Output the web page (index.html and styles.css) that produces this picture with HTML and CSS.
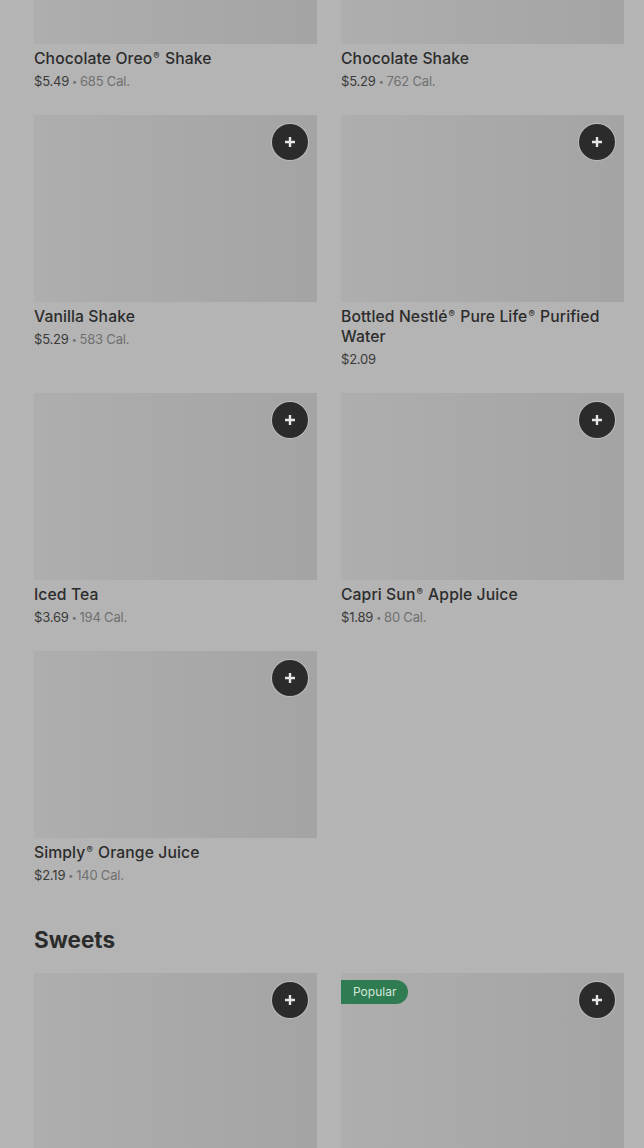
FILE: index.html
```html
<!doctype html>
<html>
<head>
    <title>Menu</title>
    <meta http-equiv="Content-Type" content="text/html; charset=utf-8" />
    <link rel="stylesheet" href="styles.css">
</head>
<body>
<div class="menu">
    <div class="grid">
        <div class="item">
            <div class="pic"></div>
            <div class="name">Chocolate Oreo<sup>®</sup> Shake</div>
            <div class="price">$5.49<span class="dot">•</span><span class="cal">685 Cal.</span></div>
        </div>
        <div class="item">
            <div class="pic"></div>
            <div class="name">Chocolate Shake</div>
            <div class="price">$5.29<span class="dot">•</span><span class="cal">762 Cal.</span></div>
        </div>
        <div class="item">
            <div class="pic"><button class="add"><svg viewBox="0 0 12 12"><path d="M6 1v10M1 6h10"/></svg></button></div>
            <div class="name">Vanilla Shake</div>
            <div class="price">$5.29<span class="dot">•</span><span class="cal">583 Cal.</span></div>
        </div>
        <div class="item">
            <div class="pic"><button class="add"><svg viewBox="0 0 12 12"><path d="M6 1v10M1 6h10"/></svg></button></div>
            <div class="name">Bottled Nestlé<sup>®</sup> Pure Life<sup>®</sup> Purified Water</div>
            <div class="price">$2.09</div>
        </div>
        <div class="item">
            <div class="pic"><button class="add"><svg viewBox="0 0 12 12"><path d="M6 1v10M1 6h10"/></svg></button></div>
            <div class="name">Iced Tea</div>
            <div class="price">$3.69<span class="dot">•</span><span class="cal">194 Cal.</span></div>
        </div>
        <div class="item">
            <div class="pic"><button class="add"><svg viewBox="0 0 12 12"><path d="M6 1v10M1 6h10"/></svg></button></div>
            <div class="name">Capri Sun<sup>®</sup> Apple Juice</div>
            <div class="price">$1.89<span class="dot">•</span><span class="cal">80 Cal.</span></div>
        </div>
        <div class="item">
            <div class="pic"><button class="add"><svg viewBox="0 0 12 12"><path d="M6 1v10M1 6h10"/></svg></button></div>
            <div class="name">Simply<sup>®</sup> Orange Juice</div>
            <div class="price">$2.19<span class="dot">•</span><span class="cal">140 Cal.</span></div>
        </div>
    </div>

    <h2>Sweets</h2>
    <div class="grid">
        <div class="item">
            <div class="pic"><button class="add"><svg viewBox="0 0 12 12"><path d="M6 1v10M1 6h10"/></svg></button></div>
        </div>
        <div class="item">
            <div class="pic"><span class="badge">Popular</span><button class="add"><svg viewBox="0 0 12 12"><path d="M6 1v10M1 6h10"/></svg></button></div>
        </div>
    </div>
</div>
</body>
</html>
```

FILE: styles.css
```css
body     { margin:0; background-color:#b4b4b4; font-family:"Inter", "Roboto", sans-serif; color:#2c2c2c; overflow:hidden; }
.menu    { padding:0 20px 0 34px; margin-top:-143px; }
.grid    { display:grid; grid-template-columns:1fr 1fr; column-gap:24px; row-gap:24px; }
.pic     { position:relative; height:187px; background:linear-gradient(90deg, #aeaeae, #a4a4a4); }
.name    { margin-top:5px; font-size:15.7px; font-weight:500; line-height:20px; letter-spacing:0.1px; }
.name sup { font-size:0.6em; line-height:1; vertical-align:baseline; position:relative; top:-0.55em; margin:0 1px; }
.price   { margin-top:2px; height:20px; font-size:13px; line-height:20px; color:#3a3a3a; letter-spacing:-0.2px; }
.dot     { margin:0 3px; font-size:9px; line-height:1; color:#707070; vertical-align:1px; }
.cal     { color:#707070; }
h2       { margin:41px 0 19px 0; font-size:22.5px; line-height:28px; font-weight:700; color:#2c2c2c; }

.add     { position:absolute; top:9px; right:9px; width:36px; height:36px; padding:0; border:0; border-radius:50%;
           background:#2b2b2b; box-shadow:0 0 0 1px #bcbcbc; display:flex; align-items:center; justify-content:center; }
.add svg { width:12px; height:12px; stroke:#e6e6e6; stroke-width:2.4; fill:none; }
.badge   { position:absolute; top:7px; left:0; height:24px; padding:0 12px; border-radius:0 12px 12px 0;
           background:#2f7c52; color:#d6e6da; font-size:12px; line-height:24px; }
```
